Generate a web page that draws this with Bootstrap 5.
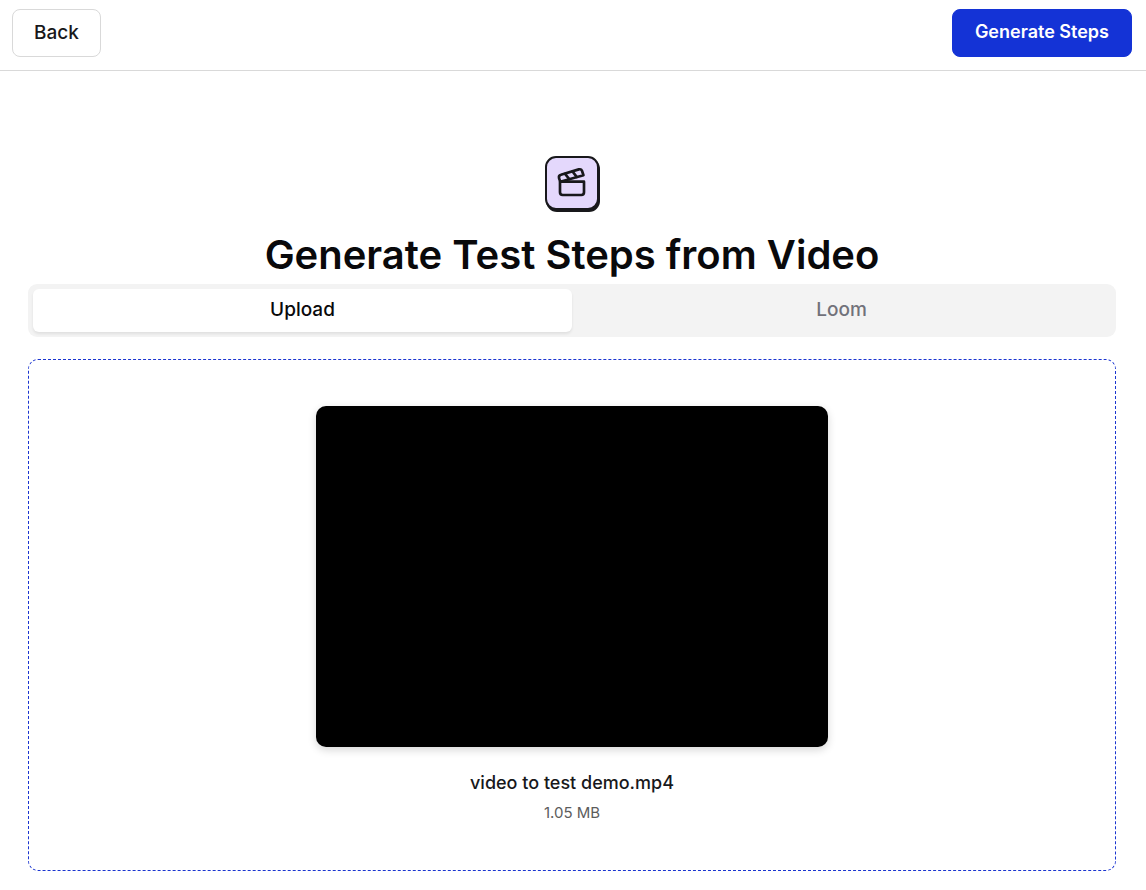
<!DOCTYPE html>
<html lang="en">
<head>
<meta charset="utf-8">
<meta name="viewport" content="width=device-width, initial-scale=1">
<title>Generate Test Steps from Video</title>
<link href="https://cdn.jsdelivr.net/npm/bootstrap@5.3.0/dist/css/bootstrap.min.css" rel="stylesheet">
<style>
  body { font-family: Inter, "Liberation Sans", sans-serif; color: #09090b; font-size: 18px; line-height: 28px; }
  .topbar { padding: 9px 14px 13px 12px; border-bottom: 1px solid #d9d9d9; }
  .action { height: 48px; padding: 0 21px; border-radius: 8px; font-size: 19px; font-weight: 500; line-height: 28px; }
  .action-back { --bs-btn-color: #18181b; --bs-btn-bg: #fff; --bs-btn-border-color: #d9d9d9; --bs-btn-hover-bg: #f4f4f5; }
  .action-generate { --bs-btn-color: #fff; --bs-btn-bg: #1433d6; --bs-btn-border-color: #1433d6; --bs-btn-hover-color: #fff; --bs-btn-hover-bg: #102bb8; font-size: 18px; font-weight: 600; padding: 0 22px 2px; }
  .page-body { padding: 85px 30px 19px 28px; }
  .tile { width: 54px; height: 54px; border: 2px solid #18181b; border-radius: 11px; background: #e4d8fc; color: #18181b; box-shadow: 1px 2px 0 #18181b; }
  .page-title { font-size: 40px; line-height: 48px; font-weight: 600; margin: 21px 0 5px; }
  .switcher { padding: 5px; background: #f3f3f3; border-radius: 9px; margin-bottom: 22px; }
  .switcher .nav-link { height: 43px; padding: 0 0 2px; font-size: 19px; font-weight: 500; border-radius: 6px; color: #71717a; }
  .switcher .nav-link.active { background: #fff; color: #09090b; box-shadow: 0 2px 3px rgba(0, 0, 0, .08); }
  .dropzone { border: 1px dashed #1a34d0; border-radius: 10px; padding: 46px 20px 45px; }
  .preview { width: 100%; max-width: 512px; aspect-ratio: 3 / 2; background: #000; border-radius: 10px; box-shadow: 0 3px 8px rgba(0, 0, 0, .16); margin-bottom: 22px; }
  .file-name { font-weight: 500; color: #18181b; }
  .file-size { font-size: 15px; line-height: 24px; color: #5c5c5c; margin-top: 4px; }
</style>
</head>
<body>
<header class="topbar d-flex justify-content-between align-items-center">
  <button type="button" class="btn action action-back">Back</button>
  <button type="button" class="btn action action-generate">Generate Steps</button>
</header>
<main class="page-body">
  <div class="d-flex flex-column align-items-center">
    <div class="tile d-flex align-items-center justify-content-center">
      <svg width="32" height="32" viewBox="0 0 24 24" fill="none" stroke="currentColor" stroke-width="2" stroke-linecap="round" stroke-linejoin="round" aria-hidden="true">
        <path d="M20.600 6.200 3.200 11l-.9-2.600c-.3-1.200.3-2.300 1.400-2.600l13.400-4c1.200-.3 2.200.3 2.500 1.400Z"/>
        <path d="m6.800 5.100 3.100 3.900"/>
        <path d="m12.400 3.400 3.100 4"/>
        <path d="M3 11h18v8a2 2 0 0 1-2 2H5a2 2 0 0 1-2-2Z"/>
      </svg>
    </div>
    <h1 class="page-title text-center">Generate Test Steps from Video</h1>
  </div>
  <div class="switcher nav nav-pills" role="tablist">
    <button type="button" class="nav-link w-50 active" id="upload-tab" role="tab" data-bs-toggle="pill" data-bs-target="#upload" aria-controls="upload" aria-selected="true">Upload</button>
    <button type="button" class="nav-link w-50" id="loom-tab" role="tab" data-bs-toggle="pill" data-bs-target="#loom" aria-controls="loom" aria-selected="false">Loom</button>
  </div>
  <div class="tab-content">
    <section class="tab-pane show active" id="upload" role="tabpanel" aria-labelledby="upload-tab">
      <div class="dropzone d-flex flex-column align-items-center text-center">
        <video class="preview" aria-label="Preview of video to test demo.mp4"></video>
        <div class="file-name">video to test demo.mp4</div>
        <div class="file-size">1.05 MB</div>
      </div>
    </section>
    <section class="tab-pane" id="loom" role="tabpanel" aria-labelledby="loom-tab"></section>
  </div>
</main>
<script src="https://cdn.jsdelivr.net/npm/bootstrap@5.3.0/dist/js/bootstrap.bundle.min.js"></script>
</body>
</html>
